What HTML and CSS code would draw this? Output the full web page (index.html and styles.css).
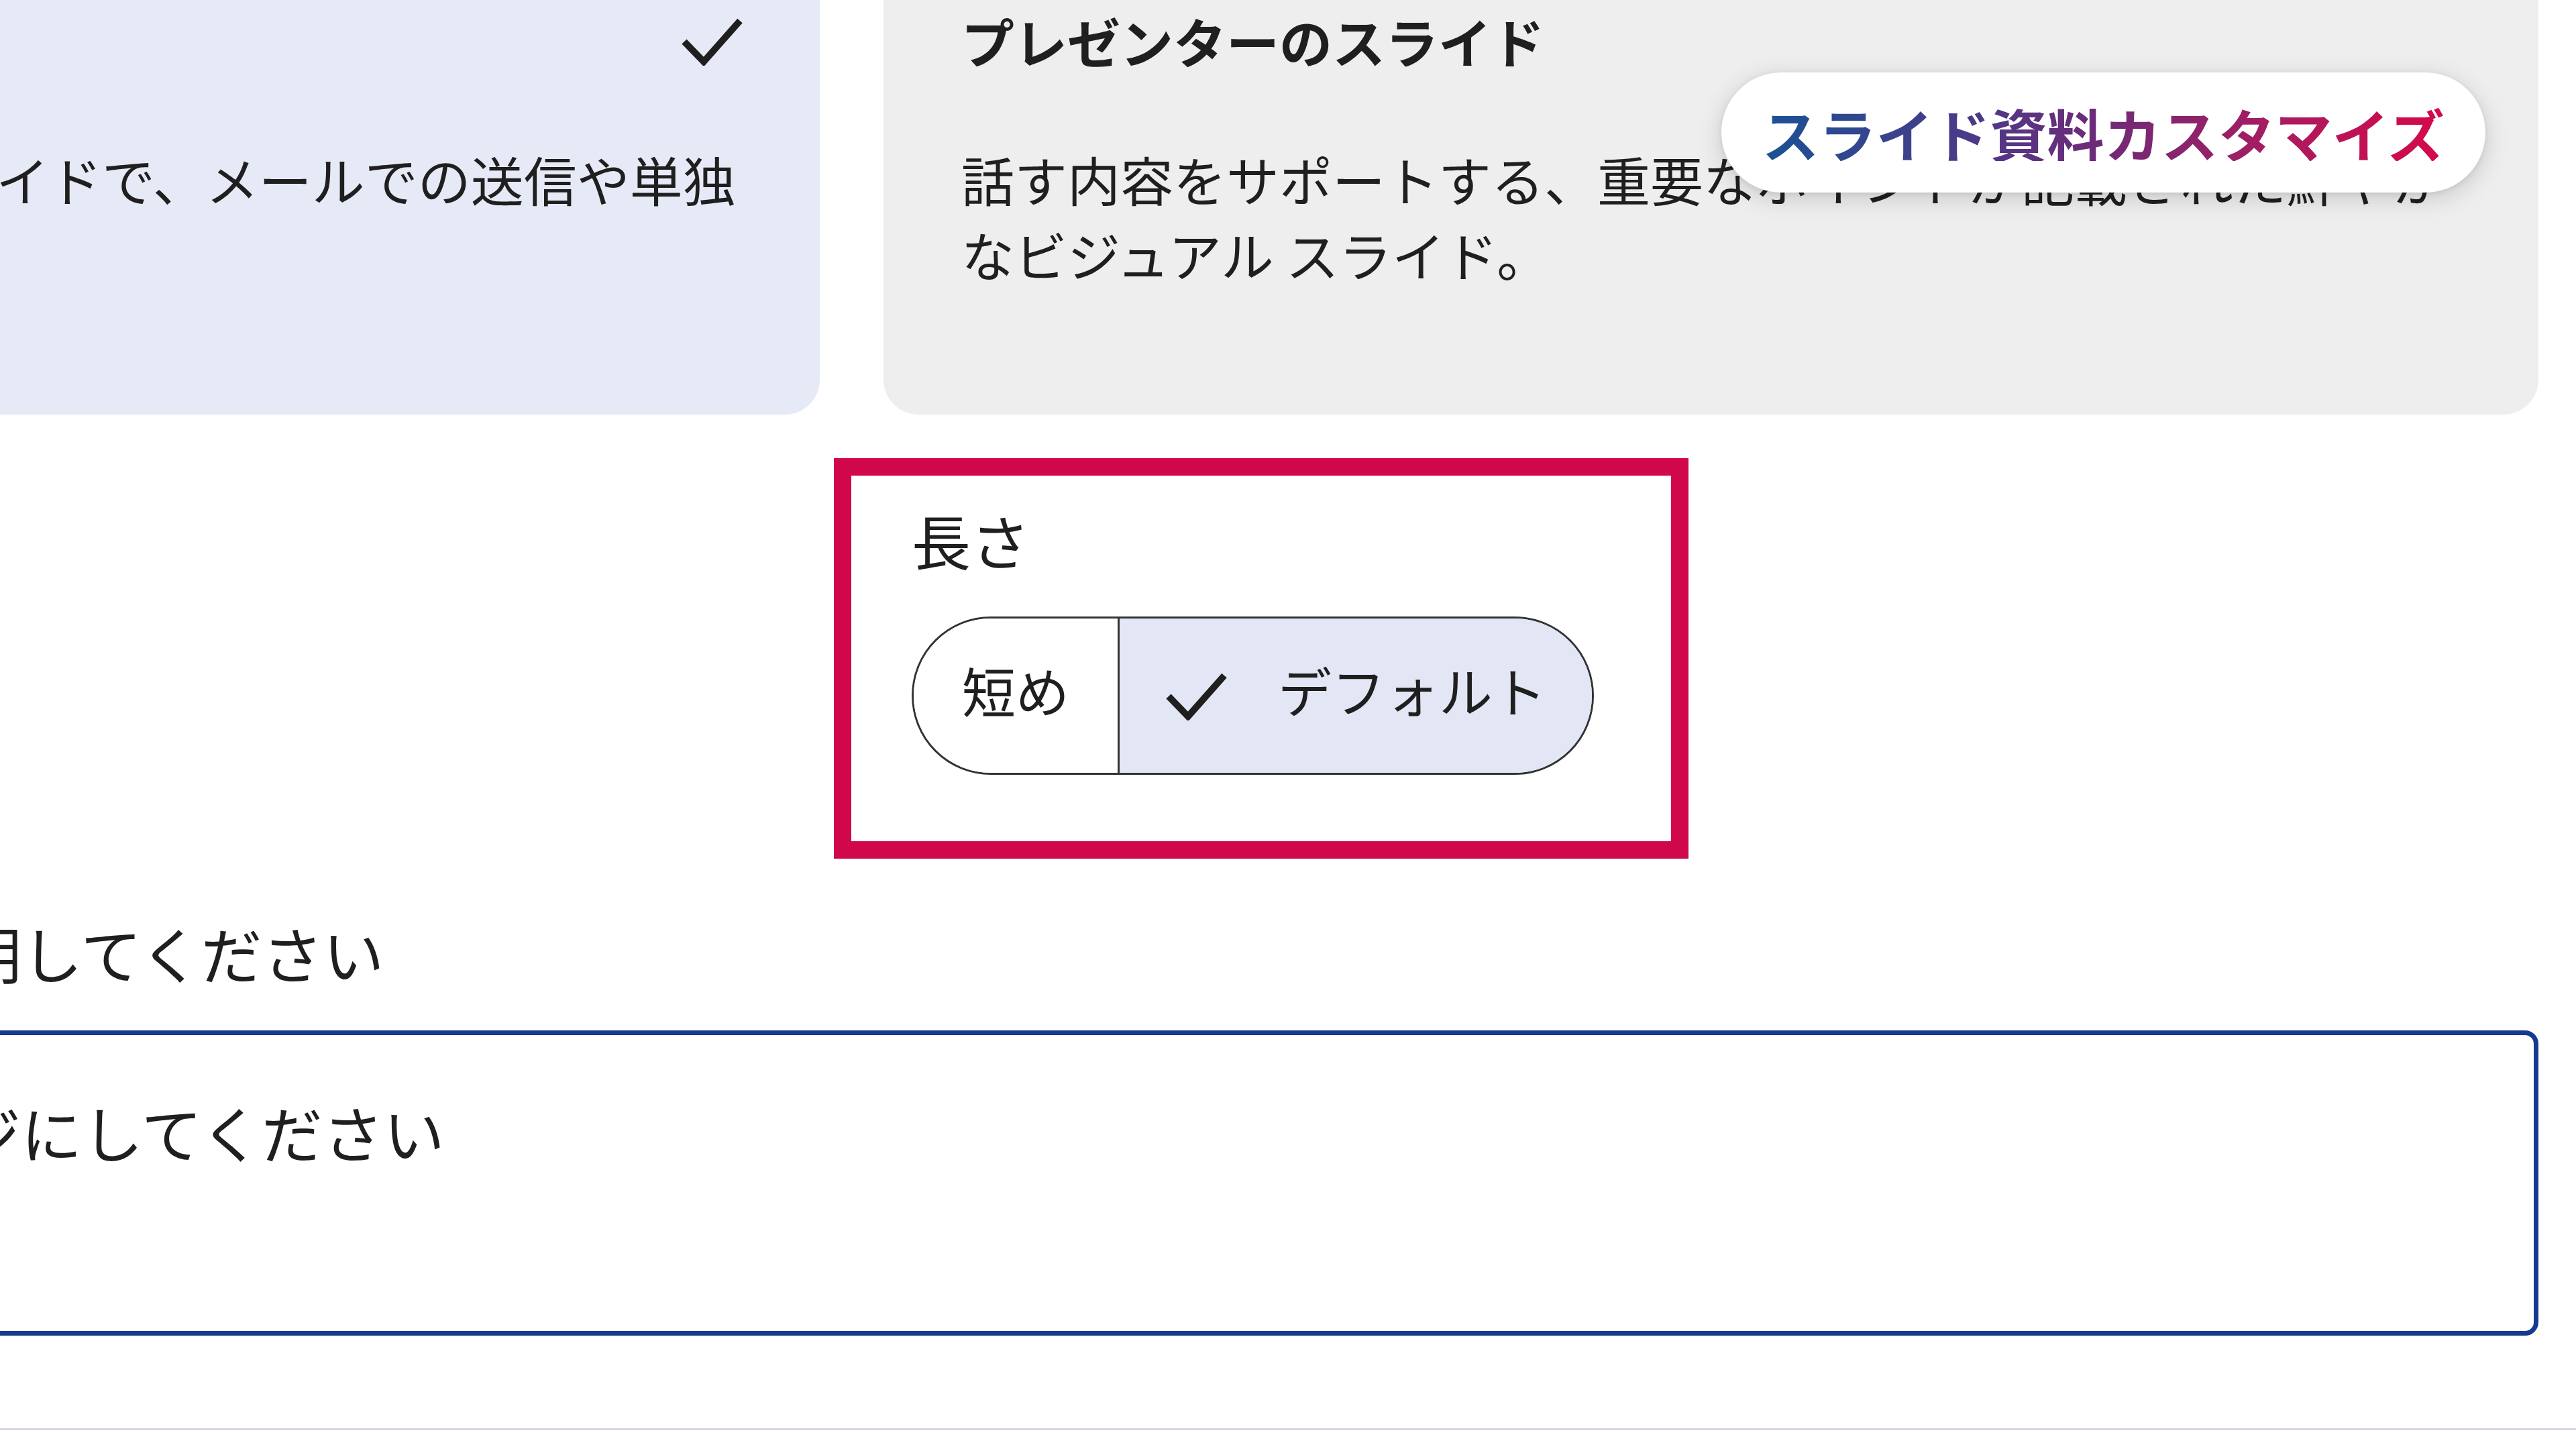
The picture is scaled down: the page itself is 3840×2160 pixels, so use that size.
FILE: index.html
```html
<!DOCTYPE html>
<html lang="ja">
<head>
    <meta charset="utf-8">
    <link rel="stylesheet" href="styles.css">
    <title>スライド資料</title>
</head>
<body>
    <div class="panel">
        <div class="formats">
            <div class="format-card selected">
                <div class="format-head">
                    <span class="format-title">詳細なスライド</span>
                    <svg class="check" viewBox="0 0 92 74" width="92" height="74">
                        <polyline points="5,38 34,68 88,7" />
                    </svg>
                </div>
                <p class="format-desc">詳細な情報を含む包括的なスライドで、メールでの送信や単独<br>での閲覧に最適です。</p>
            </div>
            <div class="format-card">
                <div class="format-head">
                    <span class="format-title">プレゼンターのスライド</span>
                </div>
                <p class="format-desc">話す内容をサポートする、重要なポイントが記載された鮮やか<br>なビジュアル スライド。</p>
                <div class="badge"><span>スライド資料カスタマイズ</span></div>
            </div>
        </div>

        <div class="length-box">
            <div class="section-label">長さ</div>
            <div class="segmented">
                <button class="seg"><span class="seg-text">短め</span></button>
                <button class="seg active">
                    <svg class="check" viewBox="0 0 92 74" width="96" height="74">
                        <polyline points="5,38 34,68 88,7" />
                    </svg>
                    <span class="seg-text">デフォルト</span>
                </button>
            </div>
        </div>

        <label class="section-label prompt-label" for="prompt">スライドの内容を詳しく説明してください</label>
        <textarea id="prompt" class="prompt">明るく親しみやすいイメージにしてください</textarea>
    </div>
    <hr class="divider">
</body>
</html>
```

FILE: styles.css
```css
* {
    box-sizing: border-box;
}

html, body {
    margin: 0;
    padding: 0;
    overflow: hidden;
}

body {
    background-color: #ffffff;
    color: #1f1f1f;
    font-family: "Noto Sans CJK JP", "Noto Sans", sans-serif;
    width: 3840px;
    height: 2160px;
}

/* the panel is wider than the window, its left part is cut off */
.panel {
    width: 4991px;
    margin-top: -95px;
    margin-left: -1207px;
}

.formats {
    display: grid;
    grid-template-columns: 1fr 2467px;
    column-gap: 95px;
}

.format-card {
    position: relative;
    background-color: #eeeeee;
    border-radius: 52px;
    padding: 101px 116px 183px 116px;
}

.format-card.selected {
    background-color: #e6e9f6;
    padding-left: 95px;
    padding-right: 115px;
}

.format-head {
    display: flex;
    justify-content: space-between;
    align-items: center;
    height: 110px;
}

.format-title {
    font-size: 79px;
    font-weight: 700;
    line-height: 110px;
    white-space: nowrap;
}

.format-desc {
    margin: 95px 0 0 0;
    font-size: 79px;
    line-height: 112px;
    white-space: nowrap;
}

.check {
    display: block;
    flex: none;
}

.check polyline {
    fill: none;
    stroke: #1f1f1f;
    stroke-width: 10;
}

/* floating caption over the second card */
.badge {
    position: absolute;
    top: 203px;
    right: 79px;
    height: 179px;
    padding: 0 61px;
    display: flex;
    align-items: center;
    background-color: #ffffff;
    border-radius: 90px;
    box-shadow: 0 8px 36px rgba(0, 0, 0, 0.16), 0 2px 8px rgba(0, 0, 0, 0.08);
}

.badge span {
    font-size: 85px;
    font-weight: 700;
    line-height: 1;
    white-space: nowrap;
    background: linear-gradient(90deg, #1b5194 0%, #4b3a88 30%, #6f2a78 50%, #a81c60 75%, #d6084a 100%);
    -webkit-background-clip: text;
    background-clip: text;
    color: transparent;
}

.length-box {
    width: fit-content;
    margin-top: 65px;
    margin-left: 2450px;
    border: 26px solid #d1074b;
    padding: 38px 115px 99px 90px;
}

.section-label {
    display: block;
    font-size: 88px;
    line-height: 114px;
    white-space: nowrap;
}

.segmented {
    display: inline-flex;
    margin-top: 58px;
    height: 236px;
    border: 3px solid #333333;
    border-radius: 118px;
    overflow: hidden;
}

.seg {
    display: flex;
    align-items: center;
    gap: 74px;
    margin: 0;
    border: 0;
    padding: 0 72px;
    background-color: #ffffff;
    color: #1f1f1f;
    font-family: "Noto Sans CJK JP", "Noto Sans", sans-serif;
    font-size: 80px;
    line-height: 1;
}

.seg-text {
    margin-bottom: 20px;
}

.seg.active {
    background-color: #e3e6f4;
    border-left: 3px solid #333333;
    padding: 0 68px 0 66px;
}

.prompt-label {
    margin-top: 82px;
    padding-left: 56px;
    font-size: 91px;
}

.prompt {
    display: block;
    width: 100%;
    height: 455px;
    margin: 60px 0 0 0;
    padding: 86px 86px 86px 50px;
    border: 7px solid #133b8f;
    border-radius: 20px;
    background-color: #ffffff;
    color: #1f1f1f;
    font-family: "Noto Sans CJK JP", "Noto Sans", sans-serif;
    font-size: 91px;
    line-height: 114px;
    resize: none;
    outline: none;
    overflow: hidden;
    white-space: nowrap;
}

.divider {
    margin: 138px 0 0 0;
    border: 0;
    height: 3px;
    background-color: #d3d7e6;
}
```
